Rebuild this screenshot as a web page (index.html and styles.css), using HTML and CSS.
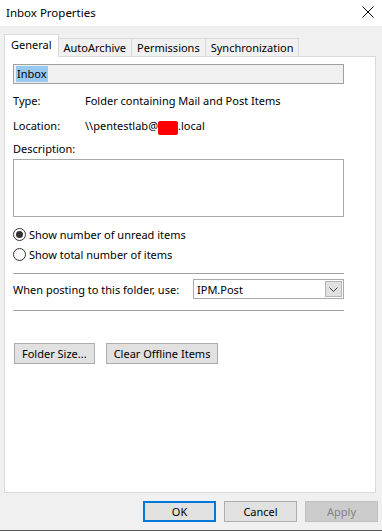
FILE: index.html
```html
<!DOCTYPE html>
<html>
<head>
<meta charset="utf-8">
<link rel="stylesheet" href="styles.css">
</head>
<body>
<div class="window">
  <div class="titlebar">
    <span class="title">Inbox Properties</span>
    <svg class="close" width="12" height="12" viewBox="0 0 12 12"><path d="M0.5 0.5 L11.5 11.5 M11.5 0.5 L0.5 11.5" stroke="#000" stroke-width="1" fill="none"/></svg>
  </div>
  <div class="body">
    <div class="tabs">
      <div class="tab active">General</div>
      <div class="tab">AutoArchive</div>
      <div class="tab">Permissions</div>
      <div class="tab">Synchronization</div>
    </div>
    <div class="panel">
      <div class="namebox"><span class="sel">Inbox</span></div>
      <div class="row row-type"><span class="lbl">Type:</span><span>Folder containing Mail and Post Items</span></div>
      <div class="row row-loc"><span class="lbl">Location:</span><span>\\pentestlab@<span class="redact">c</span>.local</span></div>
      <div class="desc-label">Description:</div>
      <div class="textarea"></div>
      <div class="radios">
        <div class="radio"><span class="circle on"></span>Show number of unread items</div>
        <div class="radio"><span class="circle"></span>Show total number of items</div>
      </div>
      <div class="sep sep-first"></div>
      <div class="posting">
        <span>When posting to this folder, use:</span>
        <div class="combo"><span class="combo-text">IPM.Post</span><span class="drop"><svg width="9" height="5" viewBox="0 0 9 5"><path d="M0.5 0.5 L4.5 4.5 L8.5 0.5" stroke="#404040" fill="none"/></svg></span></div>
      </div>
      <div class="sep sep-second"></div>
      <div class="btnrow">
        <div class="btn">Folder Size...</div>
        <div class="btn">Clear Offline Items</div>
      </div>
    </div>
    <div class="footer">
      <div class="btn big ok">OK</div>
      <div class="btn big">Cancel</div>
      <div class="btn big disabled">Apply</div>
    </div>
  </div>
</div>
</body>
</html>
```

FILE: styles.css
```css
html, body {
  margin: 0;
  padding: 0;
}
body {
  width: 382px;
  height: 531px;
  overflow: hidden;
  font-family: "Noto Sans", "Open Sans", sans-serif;
  font-size: 11px;
  color: #000;
  background: #f0f0f0;
}
.window {
  width: 382px;
  height: 531px;
  display: flex;
  flex-direction: column;
  border-bottom: 1px solid #5a5a5a;
  box-sizing: border-box;
}
.titlebar {
  height: 26px;
  background: #fff;
  display: flex;
  align-items: center;
  justify-content: space-between;
  padding: 0 8px 0 6px;
  flex: none;
}
.title {
  font-size: 11.5px;
  margin-top: -2px;
}
.close {
  margin-top: -2px;
}
.body {
  flex: 1;
  display: flex;
  flex-direction: column;
  padding: 8px 6px 0 4px;
}
.tabs {
  display: flex;
  align-items: flex-end;
  height: 22px;
  position: relative;
  z-index: 1;
}
.tab {
  height: 18px;
  line-height: 17px;
  padding: 0 5px;
  border: 1px solid #d9d9d9;
  border-bottom: none;
  background: #f0f0f0;
  box-sizing: border-box;
  margin-left: -1px;
}
.tab:first-child { margin-left: 0; }
.tab.active {
  line-height: 20px;
  background: #fff;
  padding: 0 6px;
  margin-bottom: -1px;
  height: 23px;
}
.panel {
  height: 437px;
  background: #fff;
  border: 1px solid #d9d9d9;
  box-sizing: border-box;
  padding: 7px 31px 0 8px;
  display: flex;
  flex-direction: column;
}
.namebox {
  height: 20px;
  border: 1px solid #a0a0a0;
  background: #f0f0f0;
  box-sizing: border-box;
  display: flex;
  align-items: center;
  padding-left: 2px;
}
.sel {
  background: #99c9ef;
  line-height: 16px;
  padding: 0 1px;
}
.row {
  display: flex;
  height: 16px;
  line-height: 16px;
}
.row-type { margin-top: 9px; }
.row-loc { margin-top: 9px; }
.lbl { width: 72px; flex: none; }
.redact {
  display: inline-block;
  background: #ff0000;
  color: #ff0000;
  width: 20px;
  height: 14px;
  vertical-align: -3px;
  border-radius: 2px;
}
.desc-label {
  margin-top: 7px;
  line-height: 16px;
}
.textarea {
  margin-top: 2px;
  height: 58px;
  border: 1px solid #a9a9a9;
  box-sizing: border-box;
}
.radios {
  margin-top: 9px;
  display: flex;
  flex-direction: column;
  gap: 4px;
}
.radio {
  display: flex;
  align-items: center;
  height: 16px;
}
.circle {
  width: 13px;
  height: 13px;
  border: 1px solid #333;
  border-radius: 50%;
  box-sizing: border-box;
  margin-right: 3px;
  display: flex;
  align-items: center;
  justify-content: center;
  background: #fff;
}
.circle.on::after {
  content: "";
  width: 7px;
  height: 7px;
  border-radius: 50%;
  background: #333;
}
.sep {
  height: 1px;
  background: #a0a0a0;
}
.sep-first { margin-top: 11px; }
.sep-second { margin-top: 11px; }
.posting {
  display: flex;
  align-items: center;
  margin-top: 5px;
  height: 20px;
}
.posting > span { width: 180px; flex: none; }
.combo {
  flex: 1;
  height: 20px;
  border: 1px solid #a9a9a9;
  box-sizing: border-box;
  display: flex;
  align-items: center;
  justify-content: space-between;
  padding-left: 3px;
  padding-right: 1px;
}
.drop {
  width: 17px;
  height: 16px;
  background: #e1e1e1;
  border: 1px solid #b4b4b4;
  box-sizing: border-box;
  display: flex;
  align-items: center;
  justify-content: center;
}
.btnrow {
  display: flex;
  gap: 11px;
  margin-top: 32px;
  padding-left: 1px;
}
.btn {
  height: 21px;
  line-height: 19px;
  border: 1px solid #adadad;
  background: #e1e1e1;
  box-sizing: border-box;
  padding: 0 7px;
  text-align: center;
}
.footer {
  display: flex;
  justify-content: flex-end;
  gap: 8px;
  padding-top: 8px;
  margin-right: -2px;
}
.btn.big {
  width: 73px;
  padding: 0;
}
.btn.ok {
  border: 2px solid #0078d7;
  line-height: 17px;
}
.btn.disabled {
  background: #cccccc;
  border-color: #bfbfbf;
  color: #838383;
}
```
